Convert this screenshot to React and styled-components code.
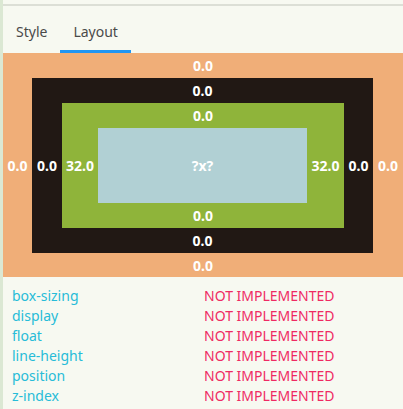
import React from 'react';
import styled, { createGlobalStyle } from 'styled-components';

const GlobalStyle = createGlobalStyle`
  html, body {
    margin: 0;
    padding: 0;
    background: #f7f9f1;
  }
  body {
    font-family: "Noto Sans", "DejaVu Sans", sans-serif;
  }
`;

const Page = styled.div`
  position: relative;
  width: 403px;
  height: 409px;
  box-sizing: border-box;
  border-left: 3px solid #dbe8d3;
  padding-top: 4px;
  overflow: hidden;
`;

const ScrollMark = styled.div`
  position: absolute;
  left: -3px;
  bottom: 0;
  width: 3px;
  height: 21px;
  background: #2f302c;
`;

const TopRule = styled.div`
  height: 2px;
  background: #dcdfd6;
`;

const Tabs = styled.div`
  display: flex;
  height: 47px;
`;

const Tab = styled.div`
  display: flex;
  align-items: center;
  box-sizing: border-box;
  padding: 6px 13px 0;
  font-size: 14px;
  color: #4a4a4a;
  border-bottom: 3px solid ${p => (p.active ? '#2196f3' : 'transparent')};
`;

const Layer = styled.div`
  display: grid;
  grid-template-columns: ${p => p.cols};
  grid-template-rows: ${p => p.rows};
  background: ${p => p.bg};
`;

const Value = styled.div`
  display: flex;
  align-items: center;
  justify-content: center;
  color: #fff;
  font-size: 14px;
  font-weight: 700;
  white-space: nowrap;
  grid-column: ${p => p.col || 'auto'};
  grid-row: ${p => p.row || 'auto'};
`;

const Inner = styled.div`
  grid-column: 2;
  grid-row: 2;
  display: flex;
`;

const Content = styled.div`
  flex: 1;
  height: 75px;
  background: #b1d0d4;
  display: flex;
  align-items: center;
  justify-content: center;
  color: #fff;
  font-size: 14px;
  font-weight: 700;
`;

const Props = styled.div`
  padding: 8px 0 0 9px;
`;

const Row = styled.div`
  display: grid;
  grid-template-columns: 192px 1fr;
  height: 20px;
  align-items: center;
  font-size: 14px;
`;

const Name = styled.span`
  color: #27bcd8;
`;

const State = styled.span`
  color: #ef2a63;
`;

const box = [
  { bg: '#f0ae78', cols: '29px 1fr 30px', rows: '25px 1fr 24px', top: '0.0', right: '0.0', bottom: '0.0', left: '0.0' },
  { bg: '#211814', cols: '30px 1fr 29px', rows: '25px 1fr 25px', top: '0.0', right: '0.0', bottom: '0.0', left: '0.0' },
  { bg: '#8fb43a', cols: '36px 1fr 37px', rows: '25px 1fr 25px', top: '0.0', right: '32.0', bottom: '0.0', left: '32.0' },
];

const props = ['box-sizing', 'display', 'float', 'line-height', 'position', 'z-index'];

const renderBox = (i) => {
  if (i >= box.length) return <Content>?x?</Content>;
  const b = box[i];
  return (
    <Layer bg={b.bg} cols={b.cols} rows={b.rows} style={i > 0 ? { flex: 1 } : undefined}>
      <Value col="1 / 4" row="1">{b.top}</Value>
      <Value col="1" row="2">{b.left}</Value>
      <Inner>{renderBox(i + 1)}</Inner>
      <Value col="3" row="2">{b.right}</Value>
      <Value col="1 / 4" row="3">{b.bottom}</Value>
    </Layer>
  );
};

const App = () => (
  <Page>
    <GlobalStyle />
    <TopRule />
    <Tabs>
      <Tab>Style</Tab>
      <Tab active>Layout</Tab>
    </Tabs>
    {renderBox(0)}
    <Props>
      {props.map(p => (
        <Row key={p}>
          <Name>{p}</Name>
          <State>NOT IMPLEMENTED</State>
        </Row>
      ))}
    </Props>
    <ScrollMark />
  </Page>
);

export default App;
